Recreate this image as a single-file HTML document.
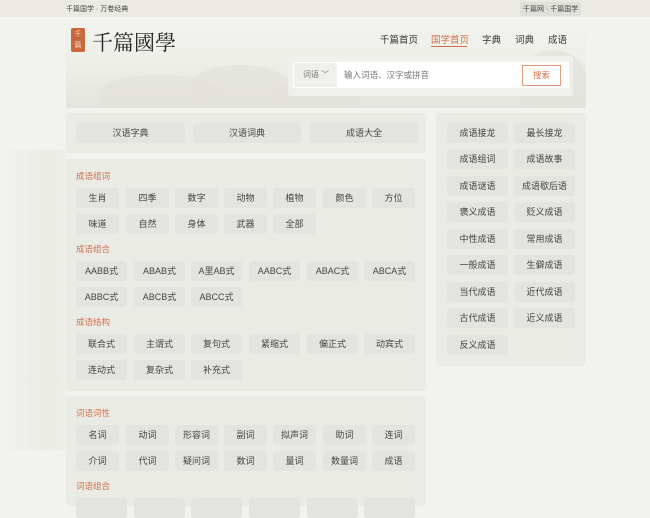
<!DOCTYPE html>
<html><head><meta charset="utf-8"><style>
*{margin:0;padding:0;box-sizing:border-box}
body{width:650px;height:500px;overflow:hidden;background:#f2f2ee;font-family:"Liberation Sans","Noto Sans CJK SC",sans-serif;color:#333;position:relative}
.a{position:absolute}
.top{left:0;top:0;width:650px;height:17px;background:#ebebe4;font-size:7px;color:#444}
.banner{left:66px;top:17px;width:520px;height:91px;background:linear-gradient(180deg,#f2f2ee 0%,#efefea 45%,#e8e8e2 80%,#e4e4de 100%)}
.m{border-radius:50% 50% 0 0;background:#e2e2dc;opacity:.7}
.box{background:#ebebe6;border-radius:4px}
.b{position:absolute;background:#e3e3df;border-radius:3px;height:20px;line-height:20px;text-align:center;font-size:9px;color:#444}
.lab{position:absolute;font-size:8.5px;color:#d0704a}
.nav{font-size:9.5px;color:#333;top:32px}
</style></head><body>
<div class="a top"><span class="a" style="left:66px;top:4px">千篇国学 · 万卷经典</span><span class="a" style="left:520px;top:2px;background:#e0e0da;padding:2px 3px;border-radius:2px">千篇网 · 千篇国学</span></div>
<div class="a" style="left:0;top:150px;width:66px;height:300px;background:linear-gradient(90deg,#f2f2ee,#ebebe6 70%,#efefea)"></div>
<div class="a banner"></div>
<div class="a m" style="left:100px;top:75px;width:120px;height:33px"></div>
<div class="a m" style="left:190px;top:65px;width:100px;height:43px"></div>
<div class="a m" style="left:270px;top:80px;width:90px;height:28px"></div>
<div class="a m" style="left:520px;top:50px;width:66px;height:58px"></div>
<div class="a" style="left:71px;top:28px;width:14px;height:24px;background:#c9673f;border-radius:2px;color:#f3d9c8;font-size:7px;text-align:center;line-height:11px;padding-top:1px">千<br>篇</div>
<div class="a" style="left:92px;top:27px;font-family:'Noto Serif CJK SC',serif;font-size:21px;color:#222;letter-spacing:0px">千篇國學</div>
<div class="a nav" style="left:380px">千篇首页</div>
<div class="a nav" style="left:431px;color:#d0704a">国学首页</div>
<div class="a" style="left:431px;top:46px;width:36px;height:1px;background:#d0704a"></div>
<div class="a nav" style="left:482px">字典</div>
<div class="a nav" style="left:515px">词典</div>
<div class="a nav" style="left:548px">成语</div>
<div class="a" style="left:288px;top:56px;width:285px;height:40px;background:#efefeb;border-radius:3px"></div>
<div class="a" style="left:293px;top:62px;width:276px;height:26px;background:#fff"></div>
<div class="a" style="left:294px;top:63px;width:43px;height:24px;background:#efefeb;font-size:8px;color:#777;line-height:24px;padding-left:9px">词语 ﹀</div>
<div class="a" style="left:344px;top:69px;font-size:8.5px;color:#777">输入词语、汉字或拼音</div>
<div class="a" style="left:522px;top:65px;width:39px;height:21px;border:1px solid #e09a7c;color:#d0704a;font-size:8.5px;text-align:center;line-height:19px">搜索</div>

<div class="a box" style="left:66px;top:113px;width:360px;height:40px"></div>
<div class="b" style="left:76px;top:123px;width:109px">汉语字典</div>
<div class="b" style="left:193px;top:123px;width:108px">汉语词典</div>
<div class="b" style="left:310px;top:123px;width:108px">成语大全</div>

<div class="a box" style="left:66px;top:159px;width:360px;height:232px"></div>
<div class="lab" style="left:76px;top:170px">成语组词</div>
<div class="b" style="left:76px;top:188px;width:43px">生肖</div><div class="b" style="left:126px;top:188px;width:43px">四季</div><div class="b" style="left:175px;top:188px;width:43px">数字</div><div class="b" style="left:224px;top:188px;width:43px">动物</div><div class="b" style="left:273px;top:188px;width:43px">植物</div><div class="b" style="left:323px;top:188px;width:43px">颜色</div><div class="b" style="left:372px;top:188px;width:43px">方位</div>
<div class="b" style="left:76px;top:214px;width:43px">味道</div><div class="b" style="left:126px;top:214px;width:43px">自然</div><div class="b" style="left:175px;top:214px;width:43px">身体</div><div class="b" style="left:224px;top:214px;width:43px">武器</div><div class="b" style="left:273px;top:214px;width:43px">全部</div>
<div class="lab" style="left:76px;top:243px">成语组合</div>
<div class="b" style="left:76px;top:261px;width:51px">AABB式</div><div class="b" style="left:134px;top:261px;width:51px">ABAB式</div><div class="b" style="left:191px;top:261px;width:51px">A里AB式</div><div class="b" style="left:249px;top:261px;width:51px">AABC式</div><div class="b" style="left:307px;top:261px;width:51px">ABAC式</div><div class="b" style="left:364px;top:261px;width:51px">ABCA式</div>
<div class="b" style="left:76px;top:287px;width:51px">ABBC式</div><div class="b" style="left:134px;top:287px;width:51px">ABCB式</div><div class="b" style="left:191px;top:287px;width:51px">ABCC式</div>
<div class="lab" style="left:76px;top:316px">成语结构</div>
<div class="b" style="left:76px;top:334px;width:51px">联合式</div><div class="b" style="left:134px;top:334px;width:51px">主谓式</div><div class="b" style="left:191px;top:334px;width:51px">复句式</div><div class="b" style="left:249px;top:334px;width:51px">紧缩式</div><div class="b" style="left:307px;top:334px;width:51px">偏正式</div><div class="b" style="left:364px;top:334px;width:51px">动宾式</div>
<div class="b" style="left:76px;top:360px;width:51px">连动式</div><div class="b" style="left:134px;top:360px;width:51px">复杂式</div><div class="b" style="left:191px;top:360px;width:51px">补充式</div>

<div class="a box" style="left:66px;top:396px;width:360px;height:110px"></div>
<div class="lab" style="left:76px;top:407px">词语词性</div>
<div class="b" style="left:76px;top:425px;width:43px">名词</div><div class="b" style="left:126px;top:425px;width:43px">动词</div><div class="b" style="left:175px;top:425px;width:43px">形容词</div><div class="b" style="left:224px;top:425px;width:43px">副词</div><div class="b" style="left:273px;top:425px;width:43px">拟声词</div><div class="b" style="left:323px;top:425px;width:43px">助词</div><div class="b" style="left:372px;top:425px;width:43px">连词</div>
<div class="b" style="left:76px;top:451px;width:43px">介词</div><div class="b" style="left:126px;top:451px;width:43px">代词</div><div class="b" style="left:175px;top:451px;width:43px">疑问词</div><div class="b" style="left:224px;top:451px;width:43px">数词</div><div class="b" style="left:273px;top:451px;width:43px">量词</div><div class="b" style="left:323px;top:451px;width:43px">数量词</div><div class="b" style="left:372px;top:451px;width:43px">成语</div>
<div class="lab" style="left:76px;top:480px">词语组合</div>
<div class="b" style="left:76px;top:498px;width:51px"></div><div class="b" style="left:134px;top:498px;width:51px"></div><div class="b" style="left:191px;top:498px;width:51px"></div><div class="b" style="left:249px;top:498px;width:51px"></div><div class="b" style="left:307px;top:498px;width:51px"></div><div class="b" style="left:364px;top:498px;width:51px"></div>

<div class="a box" style="left:436px;top:113px;width:150px;height:253px"></div>
<div class="b" style="left:447px;top:123px;width:61px">成语接龙</div><div class="b" style="left:514px;top:123px;width:61px">最长接龙</div>
<div class="b" style="left:447px;top:149px;width:61px">成语组词</div><div class="b" style="left:514px;top:149px;width:61px">成语故事</div>
<div class="b" style="left:447px;top:176px;width:61px">成语谜语</div><div class="b" style="left:514px;top:176px;width:61px">成语歇后语</div>
<div class="b" style="left:447px;top:202px;width:61px">褒义成语</div><div class="b" style="left:514px;top:202px;width:61px">贬义成语</div>
<div class="b" style="left:447px;top:229px;width:61px">中性成语</div><div class="b" style="left:514px;top:229px;width:61px">常用成语</div>
<div class="b" style="left:447px;top:255px;width:61px">一般成语</div><div class="b" style="left:514px;top:255px;width:61px">生僻成语</div>
<div class="b" style="left:447px;top:282px;width:61px">当代成语</div><div class="b" style="left:514px;top:282px;width:61px">近代成语</div>
<div class="b" style="left:447px;top:308px;width:61px">古代成语</div><div class="b" style="left:514px;top:308px;width:61px">近义成语</div>
<div class="b" style="left:447px;top:335px;width:61px">反义成语</div>
</body></html>
